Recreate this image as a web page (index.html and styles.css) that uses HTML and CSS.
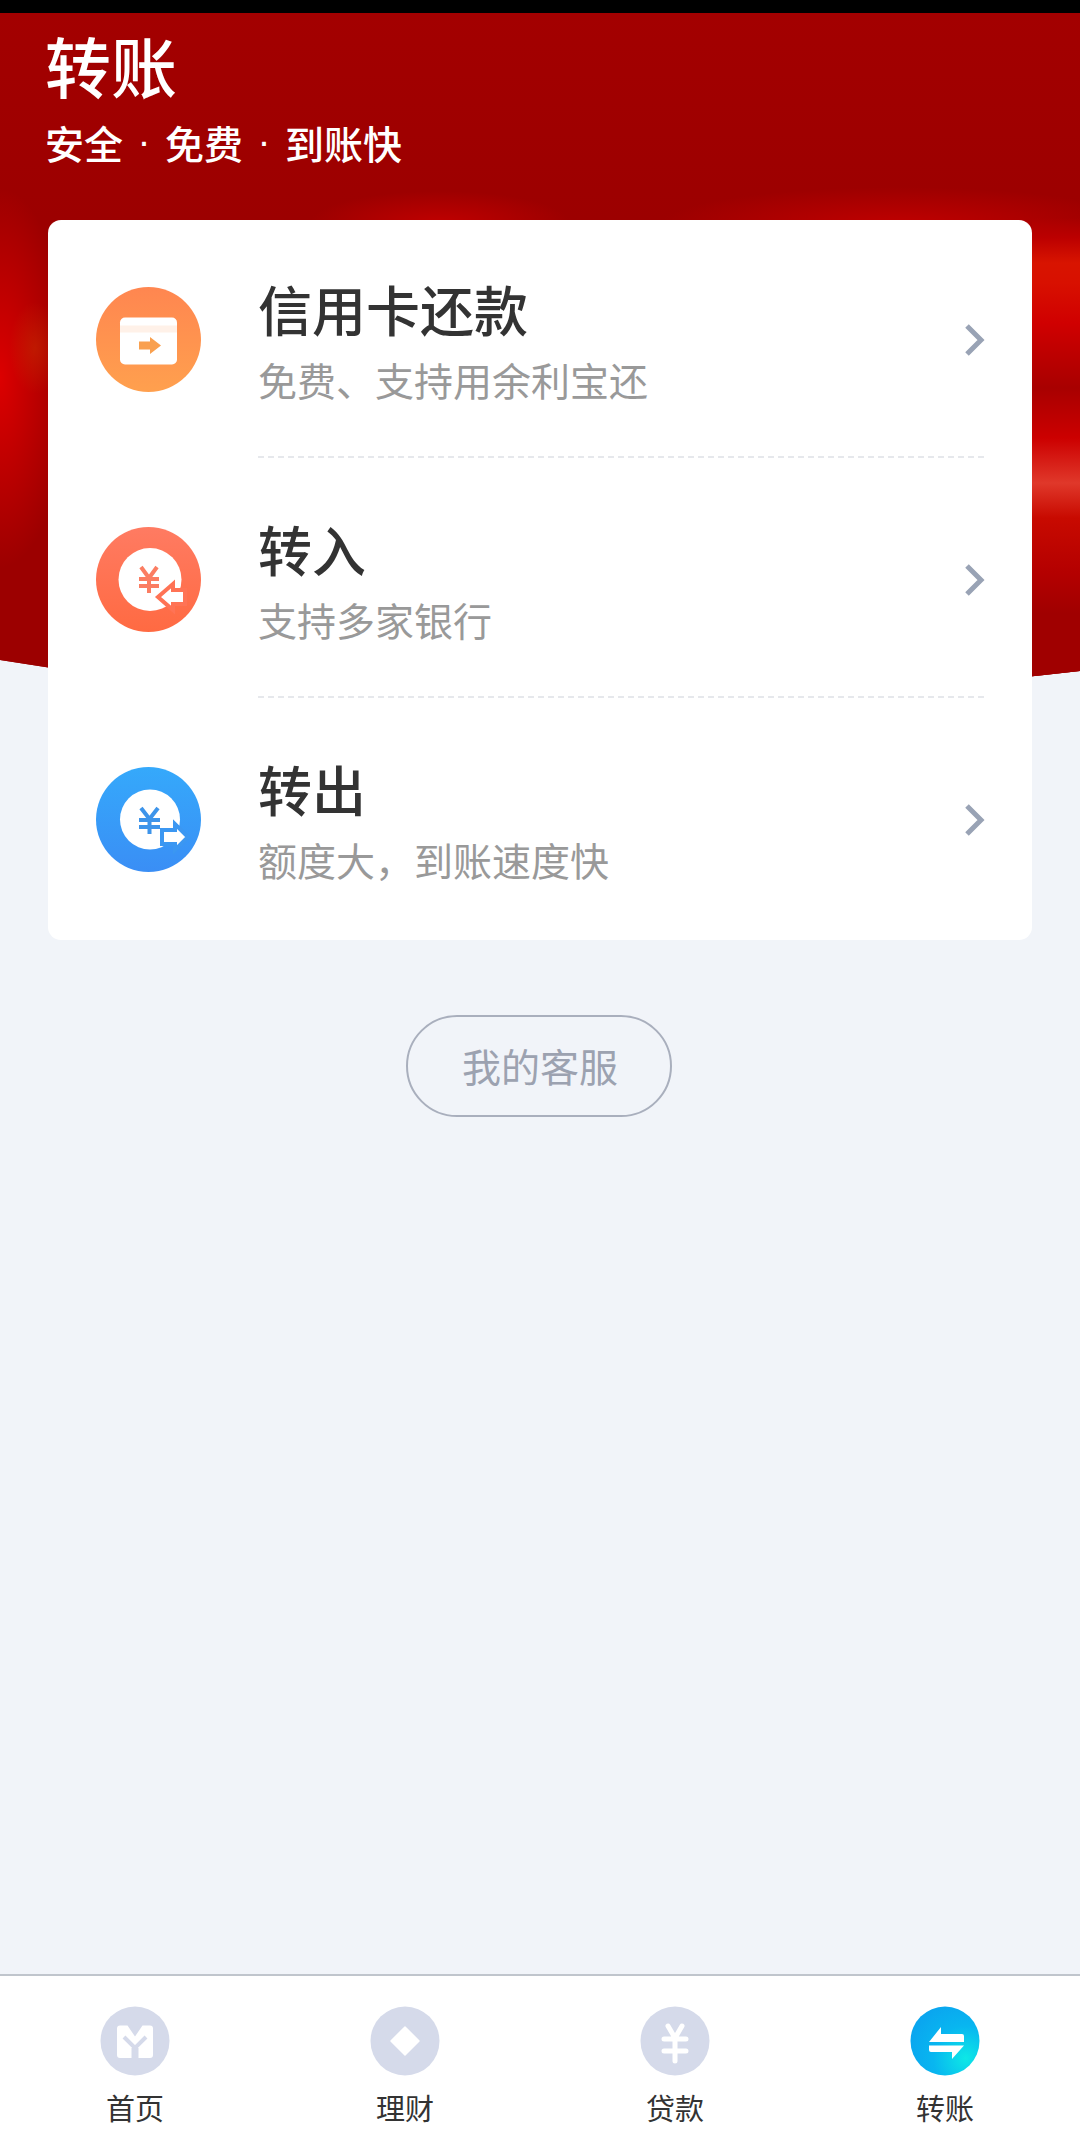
FILE: index.html
```html
<!DOCTYPE html>
<html lang="zh-CN">
<head>
    <meta charset="UTF-8">
    <meta name="viewport" content="width=device-width, initial-scale=1.0">
    <title>转账</title>
    <link rel="stylesheet" href="styles.css">
</head>
<body>

<div class="page">
    <div class="status-bar"></div>

    <header class="hero">
        <h1>转账</h1>
        <p class="tagline"><span>安全</span><span class="dot">·</span><span>免费</span><span class="dot">·</span><span>到账快</span></p>
    </header>

    <main>
        <section class="card">
            <a class="row" href="#">
                <svg class="row-icon" viewBox="0 0 105 105">
                    <defs>
                        <linearGradient id="orange" x1="0" y1="0" x2="0" y2="1">
                            <stop offset="0" stop-color="#ff8650"/>
                            <stop offset="1" stop-color="#ffa04e"/>
                        </linearGradient>
                    </defs>
                    <circle cx="52.5" cy="52.5" r="52.5" fill="url(#orange)"/>
                    <rect x="24" y="30.5" width="57" height="47" rx="5" fill="#fff"/>
                    <rect x="24" y="38.5" width="57" height="7" fill="#fff1e8"/>
                    <path d="M43 54.5h11v-4.5l11 8.500-11 8.500v-4.500H43z" fill="#f9a04f"/>
                </svg>
                <div class="row-text">
                    <h2>信用卡还款</h2>
                    <p>免费、支持用余利宝还</p>
                </div>
                <svg class="chevron" viewBox="0 0 22 34"><path d="M3 3l14 14L3 31" fill="none" stroke="#99a3b5" stroke-width="5"/></svg>
            </a>
            <a class="row" href="#">
                <svg class="row-icon" viewBox="0 0 105 105">
                    <defs>
                        <linearGradient id="coral" x1="0" y1="0" x2="0" y2="1">
                            <stop offset="0" stop-color="#ff7b62"/>
                            <stop offset="1" stop-color="#ff6a42"/>
                        </linearGradient>
                    </defs>
                    <circle cx="52.5" cy="52.5" r="52.5" fill="url(#coral)"/>
                    <circle cx="54" cy="52.5" r="31.5" fill="#fff"/>
                    <path d="M45 40l8 11 8-11M43 52h20M43 59h20M53 51v15" fill="none" stroke="#fb7d62" stroke-width="4"/>
                    <path d="M77 57L62 70l15 13v-6h12V63H77z" fill="#fff" stroke="#ff7355" stroke-width="4"/>
                </svg>
                <div class="row-text">
                    <h2>转入</h2>
                    <p>支持多家银行</p>
                </div>
                <svg class="chevron" viewBox="0 0 22 34"><path d="M3 3l14 14L3 31" fill="none" stroke="#99a3b5" stroke-width="5"/></svg>
            </a>
            <a class="row" href="#">
                <svg class="row-icon" viewBox="0 0 105 105">
                    <defs>
                        <linearGradient id="blue" x1="0" y1="0" x2="0" y2="1">
                            <stop offset="0" stop-color="#35a9fb"/>
                            <stop offset="1" stop-color="#3a8ef5"/>
                        </linearGradient>
                    </defs>
                    <circle cx="52.5" cy="52.5" r="52.5" fill="url(#blue)"/>
                    <circle cx="54" cy="52.5" r="30" fill="#fff"/>
                    <path d="M45 41l8.500 11L62 41M43 53h21M43 60h21M53.500 52v15" fill="none" stroke="#3d94ea" stroke-width="4"/>
                    <path d="M66 63h13v-6l13 13-13 13v-6H66z" fill="#fff" stroke="#3b97f2" stroke-width="4"/>
                </svg>
                <div class="row-text">
                    <h2>转出</h2>
                    <p>额度大，到账速度快</p>
                </div>
                <svg class="chevron" viewBox="0 0 22 34"><path d="M3 3l14 14L3 31" fill="none" stroke="#99a3b5" stroke-width="5"/></svg>
            </a>
        </section>

        <a class="service-btn" href="#">我的客服</a>
    </main>

    <nav class="tabbar">
        <a class="tab" href="#">
            <svg viewBox="0 0 70 70">
                <circle cx="35" cy="35" r="34.500" fill="#d5daea"/>
                <path d="M20 19.500h7.500l7.500 11 7.500-11H50q3 0 3 3V49q0 3-3 3H20q-3 0-3-3V22.500q0-3 3-3z" fill="#fff"/>
                <path d="M24 31l11 11 11-11" fill="none" stroke="#d5daea" stroke-width="4"/>
                <path d="M35 42v10" fill="none" stroke="#d5daea" stroke-width="7"/>
            </svg>
            <span>首页</span>
        </a>
        <a class="tab" href="#">
            <svg viewBox="0 0 70 70">
                <circle cx="35" cy="35" r="34.500" fill="#d5daea"/>
                <path d="M35 21l14 14-14 14-14-14z" fill="#fff" stroke="#fff" stroke-width="1.500" stroke-linejoin="round"/>
            </svg>
            <span>理财</span>
        </a>
        <a class="tab" href="#">
            <svg viewBox="0 0 70 70">
                <circle cx="35" cy="35" r="34.500" fill="#d5daea"/>
                <path d="M28 20l7 12 7-12M24 33h22M24 45h22M35 32v23" fill="none" stroke="#fff" stroke-width="5" stroke-linecap="round"/>
            </svg>
            <span>贷款</span>
        </a>
        <a class="tab tab-active" href="#">
            <svg viewBox="0 0 70 70">
                <defs>
                    <radialGradient id="teal" cx="0.8" cy="0.75" r="0.85">
                        <stop offset="0" stop-color="#0de8e6"/>
                        <stop offset="0.55" stop-color="#08b6f0"/>
                        <stop offset="1" stop-color="#0aa6ef"/>
                    </radialGradient>
                </defs>
                <circle cx="35" cy="35" r="34.500" fill="url(#teal)"/>
                <path d="M31 21v7h21q2 0 2 2v6H19z" fill="#fff"/>
                <path d="M19 39.500h35L42 53v-7H21q-2 0-2-2z" fill="#fff"/>
            </svg>
            <span>转账</span>
        </a>
    </nav>
</div>

</body>
</html>
```

FILE: styles.css
```css
* {
    box-sizing: border-box;
}

body {
    margin: 0;
    font-family: "Noto Sans CJK SC", "Noto Sans", sans-serif;
    background-color: #f1f4f9;
}

h1, h2, p {
    margin: 0;
    font-weight: 400;
}

a {
    text-decoration: none;
    color: inherit;
}

.page {
    display: flex;
    flex-direction: column;
    height: 100vh;
}

.status-bar {
    height: 13px;
    background-color: #000;
}

/* red banner, the card overlaps its lower part */
.hero {
    height: 696px;
    padding: 15px 45px 0;
    color: #fff;
    clip-path: path("M0 0H1080V658Q480 727 0 647Z");
    background-color: #9c0000;
    background-image:
        linear-gradient(rgba(192, 0, 0, 0) 205px, #bc0000 225px, #d81400 250px, #d81000 270px, #d00000 310px, #a80000 375px, #cc0000 425px, #e0382a 470px, #c80a00 505px, #b40000 560px, #a00000 600px),
        radial-gradient(26px 46px at 35px 335px, rgba(200, 70, 0, 0.35), rgba(200, 70, 0, 0) 100%),
        radial-gradient(70px 190px at 0 365px, #dc0000, rgba(220, 0, 0, 0) 100%),
        radial-gradient(130px 32px at 440px 210px, #c00000, rgba(192, 0, 0, 0) 100%),
        radial-gradient(240px 38px at 900px 212px, #c00000, rgba(192, 0, 0, 0) 100%),
        linear-gradient(#a30000, #9c0000 30%, #9c0000);
    background-size: 48px 100%, auto, auto, auto, auto, auto;
    background-position: right top, left top, left top, left top, left top, left top;
    background-repeat: no-repeat;
}

.hero h1 {
    font-size: 66px;
    line-height: 72px;
    font-weight: 500;
}

.tagline {
    display: flex;
    margin-top: 17px;
    font-size: 39px;
    line-height: 50px;
    font-weight: 500;
}

.dot {
    width: 42px;
    text-align: center;
    font-family: "Liberation Sans", sans-serif;
}

main {
    flex: 1;
    display: flex;
    flex-direction: column;
    align-items: center;
    margin-top: -489px;
    position: relative;
}

.card {
    width: 984px;
    background-color: #fff;
    border-radius: 13px;
}

.row {
    display: flex;
    align-items: center;
    height: 240px;
    padding: 0 46px 0 48px;
    position: relative;
}

.row + .row::before {
    content: "";
    position: absolute;
    left: 210px;
    right: 48px;
    top: -4px;
    border-top: 2px dashed #e6e8ec;
}

.row-icon {
    width: 105px;
    height: 105px;
    flex-shrink: 0;
    margin-bottom: 2px;
}

.row-text {
    flex: 1;
    margin-left: 57px;
    margin-bottom: 3px;
}

.row-text h2 {
    font-size: 54px;
    line-height: 72px;
    font-weight: 500;
    color: #333;
}

.row-text p {
    margin-top: 9px;
    font-size: 39px;
    line-height: 50px;
    color: #999;
}

.chevron {
    width: 22px;
    height: 34px;
}

.service-btn {
    display: block;
    width: 266px;
    height: 102px;
    margin-top: 75px;
    margin-right: 2px;
    padding-left: 2px;
    border: 2px solid #a9afbd;
    border-radius: 51px;
    text-align: center;
    font-size: 39px;
    line-height: 97px;
    color: #9ca2b0;
}

.tabbar {
    display: flex;
    height: 179px;
    padding-top: 30px;
    border-top: 2px solid #c0c5cc;
    background-color: #fff;
}

.tab {
    flex: 1;
    display: flex;
    flex-direction: column;
    align-items: center;
    font-size: 29px;
    line-height: 40px;
    color: #333;
}

.tab svg {
    width: 70px;
    height: 70px;
    margin-bottom: 11px;
}
```
